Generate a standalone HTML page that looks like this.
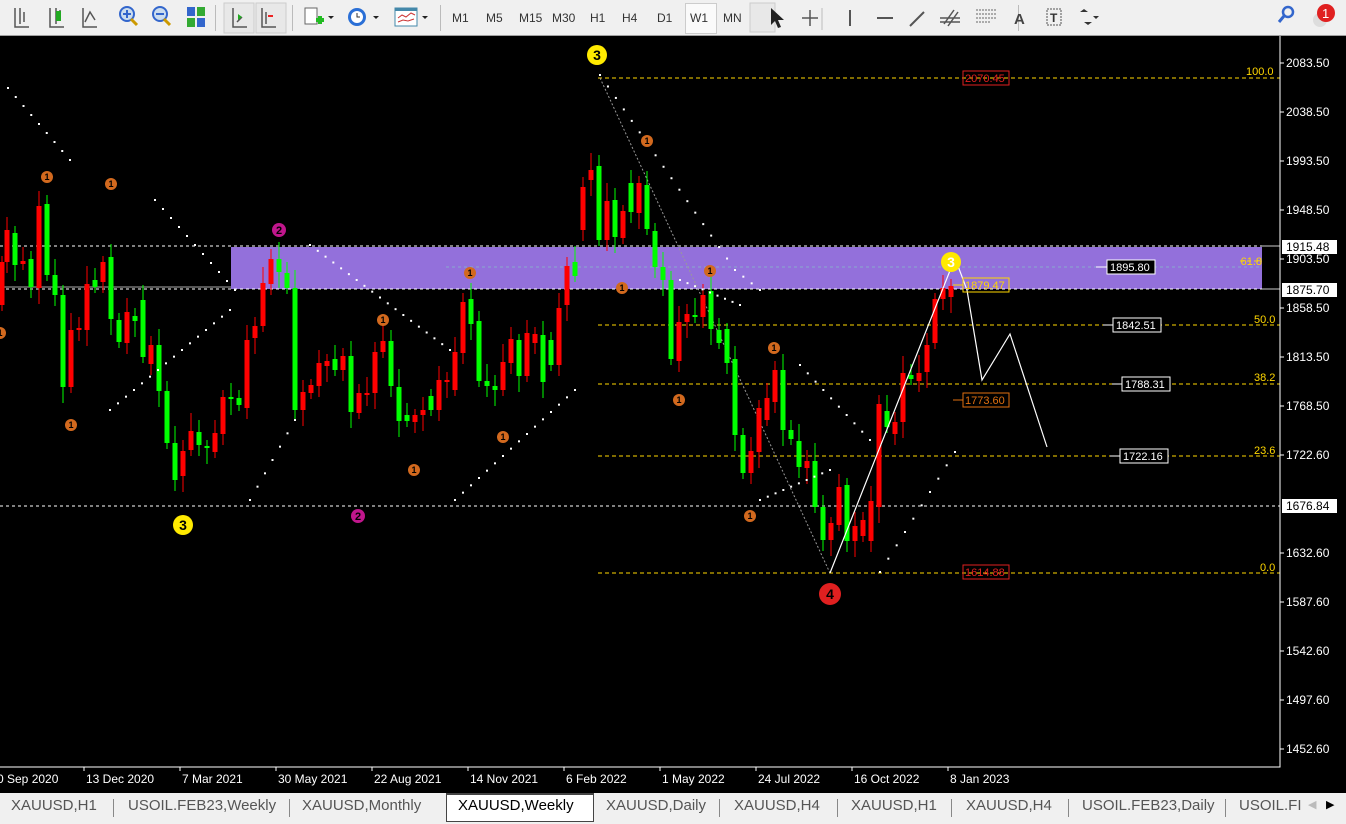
<!DOCTYPE html>
<html><head><meta charset="utf-8"><style>
body{margin:0;width:1346px;height:824px;overflow:hidden;background:#f0f0f0;font-family:"Liberation Sans",sans-serif;position:relative}
#tb{position:absolute;left:0;top:0;width:1346px;height:35px;background:#f0f0f0;border-bottom:1px solid #a0a0a0}
.tf{position:absolute;top:11px;font-size:12px;color:#333}
.sep{position:absolute;top:5px;width:1px;height:26px;background:#bbb}
#tabs{position:absolute;left:0;top:793px;width:1346px;height:31px;background:#f0f0f0}
.tab{position:absolute;top:4px;font-size:15px;color:#555}
.vs{position:absolute;top:6px;width:1px;height:18px;background:#888}
</style></head><body>
<div id="tb">
<svg width="700" height="36" style="position:absolute;left:0;top:0">
<g stroke="#555" fill="none" stroke-width="1.5">
<path d="M15 8v19h14M20 8v16M24 12v10"/>
<path d="M50 8v19h14M56 8v16M60 10v10"/>
<path d="M83 8v19h14M85 22l5-10 5 8"/>
</g>
<rect x="56" y="11" width="5" height="10" fill="#2a2"/>
<circle cx="127" cy="14" r="7" fill="#cde" stroke="#36c" stroke-width="2"/><path d="M131 19l6 6" stroke="#c90" stroke-width="3"/><path d="M123 14h8M127 10v8" stroke="#36c" stroke-width="2"/>
<circle cx="160" cy="14" r="7" fill="#cde" stroke="#36c" stroke-width="2"/><path d="M164 19l6 6" stroke="#c90" stroke-width="3"/><path d="M156 14h8" stroke="#36c" stroke-width="2"/>
<rect x="187" y="7" width="8" height="9" fill="#36c"/><rect x="197" y="7" width="8" height="9" fill="#3a3"/><rect x="187" y="18" width="8" height="9" fill="#3a3"/><rect x="197" y="18" width="8" height="9" fill="#36c"/>
<rect x="224" y="3" width="30" height="30" fill="#e8e8e8" stroke="#ccc"/><rect x="256" y="3" width="30" height="30" fill="#e8e8e8" stroke="#ccc"/>
<path d="M233 8v19h14M237 22l5-5M262 8v19h14M266 12v12" stroke="#555" stroke-width="1.5" fill="none"/>
<path d="M238 14l4 3-4 3z" fill="#2a2"/><path d="M268 16h5" stroke="#e22" stroke-width="2"/>
<rect x="305" y="8" width="12" height="16" fill="#fff" stroke="#666"/><path d="M316 20h8M320 16v8" stroke="#2b2" stroke-width="4"/><path d="M328 16l3 3 3-3z" fill="#222"/>
<circle cx="357" cy="17" r="9" fill="#2a6fd6"/><circle cx="357" cy="17" r="6" fill="#fff"/><path d="M357 13v4h3" stroke="#333" fill="none"/><path d="M373 16l3 3 3-3z" fill="#222"/>
<rect x="395" y="8" width="22" height="18" fill="#fff" stroke="#48a"/><rect x="395" y="8" width="22" height="3" fill="#48a"/><path d="M398 18l4-3 4 2 5-4 4 2M398 22l5-2 5 1 6-2" stroke="#c33" fill="none"/><path d="M422 16l3 3 3-3z" fill="#222"/>
</g></svg>
<div class="sep" style="left:215px"></div><div class="sep" style="left:292px"></div><div class="sep" style="left:440px"></div>
<span class="tf" style="left:452px">M1</span><span class="tf" style="left:486px">M5</span><span class="tf" style="left:519px">M15</span><span class="tf" style="left:552px">M30</span><span class="tf" style="left:590px">H1</span><span class="tf" style="left:622px">H4</span><span class="tf" style="left:657px">D1</span>
<div style="position:absolute;left:685px;top:3px;width:30px;height:29px;background:#fafafa;border:1px solid #ccc"></div>
<span class="tf" style="left:690px">W1</span><span class="tf" style="left:723px">MN</span>
<div class="sep" style="left:752px"></div><div class="sep" style="left:1018px"></div>
<svg width="646" height="36" style="position:absolute;left:700px;top:0">
<rect x="50" y="3" width="25" height="29" fill="#e8e8e8" stroke="#ccc"/>
<path d="M71 8v17l4-4 3 7 3-1-3-7h6z" fill="#222"/>
<path d="M110 10v16M102 18h16" stroke="#555" stroke-width="1.5"/>
<path d="M122 8v22" stroke="#bbb"/>
<path d="M150 10v16M177 18h16M210 26l14-14" stroke="#555" stroke-width="2"/>
<path d="M244 24l10-14M248 26l10-14M240 18h20M240 22h20" stroke="#555" stroke-width="1.5"/>
<path d="M276 10h20M276 14h20M276 18h20M276 22h14" stroke="#666" stroke-dasharray="2 1"/>
<text x="314" y="24" font-size="15" font-weight="bold" fill="#444" font-family="Liberation Sans,sans-serif">A</text>
<rect x="347" y="9" width="14" height="16" fill="none" stroke="#555" stroke-dasharray="2 1"/><text x="350" y="22" font-size="12" font-weight="bold" fill="#333" font-family="Liberation Sans,sans-serif">T</text>
<path d="M380 12l4-3 4 3zM384 22l4 3 4-3zM393 16l3 3 3-3z" fill="#333"/>
<circle cx="588" cy="12" r="5" fill="none" stroke="#36c" stroke-width="2.5"/><path d="M584 16l-5 6" stroke="#36c" stroke-width="3"/>
<circle cx="620" cy="20" r="7" fill="#ddd"/><circle cx="626" cy="13" r="9" fill="#e02020"/><text x="622" y="18" font-size="13" fill="#fff" font-family="Liberation Sans,sans-serif">1</text>
</svg>
</div>

<svg width="1346" height="757" style="position:absolute;left:0;top:36px" font-family="Liberation Sans,sans-serif">
<rect width="1346" height="757" fill="#000"/>
<g transform="translate(0,-36)">
<rect x="231" y="247" width="1031" height="42" fill="#9370db"/>
<g stroke="#fff" stroke-dasharray="3 3" stroke-width="1">
<path d="M0 246H1262M0 289H1262M0 506H1280"/>
</g>
<path d="M0 287H231" stroke="#aaa"/>
<path d="M1262 289H1280M1262 246H1280" stroke="#ccc"/>
<path d="M446 267H1262" stroke="#8ac" stroke-dasharray="3 3"/>
<g stroke="#ffd700" stroke-dasharray="4 3">
<path d="M598 78H1280M1240 261H1262M598 325H1280M598 384H1280M598 456H1280M598 573H1280"/>
</g>
<g fill="#ffd700" font-size="11"><text x="1246" y="75">100.0</text><text x="1262" y="265" text-anchor="end">61.8</text><text x="1254" y="323">50.0</text><text x="1254" y="381">38.2</text><text x="1254" y="454">23.6</text><text x="1260" y="571">0.0</text></g>
<path d="M600 78L830 573" stroke="#999" stroke-dasharray="2 2"/>
<g id="c"></g>
<g id="d" fill="#fff"></g>
<polyline points="830,573 955,258 967,290 982,380 1010,334 1047,447" fill="none" stroke="#fff" stroke-width="1.2"/>
<g font-size="11">
<rect x="963" y="71" width="46" height="14" fill="none" stroke="#e02020"/><text x="965" y="82" fill="#e02020">2070.45</text>
<path d="M953 285h10" stroke="#ffd700"/><rect x="963" y="278" width="46" height="14" fill="none" stroke="#ffd700"/><text x="965" y="289" fill="#ffd700">1879.47</text>
<path d="M953 400h10" stroke="#e07010"/><rect x="963" y="393" width="46" height="14" fill="none" stroke="#e07010"/><text x="965" y="404" fill="#e07010">1773.60</text>
<rect x="963" y="565" width="46" height="14" fill="none" stroke="#e02020"/><text x="965" y="576" fill="#e02020">1614.88</text>
<g fill="#fff"><path d="M1096 267h11M1103 325h10M1112 384h10M1110 456h10" stroke="#fff"/>
<rect x="1107" y="260" width="48" height="14" fill="#000" stroke="#fff"/><text x="1110" y="271">1895.80</text>
<rect x="1113" y="318" width="48" height="14" fill="#000" stroke="#fff"/><text x="1116" y="329">1842.51</text>
<rect x="1122" y="377" width="48" height="14" fill="#000" stroke="#fff"/><text x="1125" y="388">1788.31</text>
<rect x="1120" y="449" width="48" height="14" fill="#000" stroke="#fff"/><text x="1123" y="460">1722.16</text></g>
</g>
<g font-size="14" font-weight="bold" text-anchor="middle">
<circle cx="597" cy="55" r="10" fill="#ffea00"/><text x="597" y="60">3</text>
<circle cx="183" cy="525" r="10" fill="#ffea00"/><text x="183" y="530">3</text>
<circle cx="951" cy="262" r="10" fill="#ffea00"/><text x="951" y="267" fill="#fff">3</text>
<circle cx="830" cy="594" r="11" fill="#e02020"/><text x="830" y="599" fill="#000">4</text>
<circle cx="279" cy="230" r="7" fill="#c0168c"/><text x="279" y="234" font-size="11">2</text>
<circle cx="358" cy="516" r="7" fill="#c0168c"/><text x="358" y="520" font-size="11">2</text>
</g>
<g id="o" font-size="9" font-weight="bold" text-anchor="middle"></g>
<path d="M1280 36V767H0" stroke="#fff" fill="none"/>
<g fill="#fff" font-size="12">
<text x="1286" y="67">2083.50</text><text x="1286" y="116">2038.50</text><text x="1286" y="165">1993.50</text><text x="1286" y="214">1948.50</text><text x="1286" y="263">1903.50</text><text x="1286" y="312">1858.50</text><text x="1286" y="361">1813.50</text><text x="1286" y="410">1768.50</text><text x="1286" y="459">1722.60</text><text x="1286" y="557">1632.60</text><text x="1286" y="606">1587.60</text><text x="1286" y="655">1542.60</text><text x="1286" y="704">1497.60</text><text x="1286" y="753">1452.60</text>
</g>
<path d="M1280 63h4M1280 112h4M1280 161h4M1280 210h4M1280 259h4M1280 308h4M1280 357h4M1280 406h4M1280 455h4M1280 553h4M1280 602h4M1280 651h4M1280 700h4M1280 749h4" stroke="#fff"/>
<g font-size="12"><rect x="1282" y="240" width="55" height="14" fill="#fff"/><text x="1286" y="251">1915.48</text>
<rect x="1282" y="283" width="55" height="14" fill="#fff"/><text x="1286" y="294">1875.70</text>
<rect x="1282" y="499" width="55" height="14" fill="#fff"/><text x="1286" y="510">1676.84</text></g>
<g fill="#fff" font-size="12">
<text x="-3" y="783">0 Sep 2020</text><text x="86" y="783">13 Dec 2020</text><text x="182" y="783">7 Mar 2021</text><text x="278" y="783">30 May 2021</text><text x="374" y="783">22 Aug 2021</text><text x="470" y="783">14 Nov 2021</text><text x="566" y="783">6 Feb 2022</text><text x="662" y="783">1 May 2022</text><text x="758" y="783">24 Jul 2022</text><text x="854" y="783">16 Oct 2022</text><text x="950" y="783">8 Jan 2023</text>
</g>
<path d="M84 767v4M180 767v4M276 767v4M372 767v4M468 767v4M564 767v4M660 767v4M756 767v4M852 767v4M948 767v4" stroke="#fff"/>
</g></svg>

<div id="tabs">
<div style="position:absolute;left:446px;top:0;width:146px;height:26px;background:#fff;border:1px solid #444;border-top:2px solid #444"></div>
<span class="tab" style="left:11px">XAUUSD,H1</span><div class="vs" style="left:113px"></div>
<span class="tab" style="left:128px">USOIL.FEB23,Weekly</span><div class="vs" style="left:289px"></div>
<span class="tab" style="left:302px">XAUUSD,Monthly</span>
<span class="tab" style="left:458px;color:#000">XAUUSD,Weekly</span>
<span class="tab" style="left:606px">XAUUSD,Daily</span><div class="vs" style="left:719px"></div>
<span class="tab" style="left:734px">XAUUSD,H4</span><div class="vs" style="left:837px"></div>
<span class="tab" style="left:851px">XAUUSD,H1</span><div class="vs" style="left:951px"></div>
<span class="tab" style="left:966px">XAUUSD,H4</span><div class="vs" style="left:1068px"></div>
<span class="tab" style="left:1082px">USOIL.FEB23,Daily</span><div class="vs" style="left:1225px"></div>
<span class="tab" style="left:1239px">USOIL.FI</span>
<span style="position:absolute;left:1308px;top:5px;font-size:11px;color:#bbb">◀</span><span style="position:absolute;left:1326px;top:5px;font-size:11px;color:#000">▶</span>
</div>

<script>
var C=[[2,262,305,'r'],[7,230,262,'r'],[15,233,265,'g'],[23,261,264,'r'],[31,259,287,'g'],[39,206,288,'r'],[47,204,275,'g'],[55,275,295,'g'],[63,295,387,'g'],[71,330,387,'r'],[79,328,330,'r'],[87,284,330,'r'],[95,280,287,'g'],[103,262,282,'r'],[111,257,319,'g'],[119,320,342,'g'],[127,312,343,'r'],[135,316,321,'g'],[143,300,357,'g'],[151,345,364,'r'],[159,345,391,'g'],[167,391,443,'g'],[175,443,480,'g'],[183,451,476,'r'],[191,431,450,'r'],[199,432,445,'g'],[207,446,448,'g'],[215,433,452,'r'],[223,397,434,'r'],[231,397,399,'g'],[239,398,405,'g'],[247,340,408,'r'],[255,326,338,'r'],[263,283,326,'r'],[271,259,284,'r'],[279,259,272,'g'],[287,273,288,'g'],[295,288,410,'g'],[303,392,410,'r'],[311,385,393,'r'],[319,363,386,'r'],[327,361,366,'r'],[335,359,370,'g'],[343,356,370,'r'],[351,356,412,'g'],[359,393,413,'r'],[367,393,395,'r'],[375,352,393,'r'],[383,341,352,'r'],[391,341,386,'g'],[399,387,421,'g'],[407,415,421,'g'],[415,415,422,'r'],[423,410,415,'r'],[431,396,410,'g'],[439,380,410,'r'],[447,380,382,'r'],[455,352,390,'r'],[463,302,353,'r'],[471,299,324,'g'],[479,321,381,'g'],[487,381,386,'g'],[495,386,390,'g'],[503,362,390,'r'],[511,339,363,'r'],[519,340,376,'g'],[527,333,376,'r'],[535,334,343,'r'],[543,335,382,'g'],[551,340,365,'g'],[559,308,365,'r'],[567,266,305,'r'],[575,262,276,'g'],[583,187,230,'r'],[591,170,180,'r'],[599,166,240,'g'],[607,201,240,'r'],[615,200,237,'g'],[623,211,238,'r'],[631,183,212,'g'],[639,183,213,'r'],[647,185,229,'g'],[655,231,267,'g'],[663,267,280,'g'],[671,280,359,'g'],[679,322,361,'r'],[687,314,322,'r'],[695,315,317,'g'],[703,295,317,'r'],[711,291,329,'g'],[719,330,343,'g'],[727,329,363,'g'],[735,359,435,'g'],[743,435,473,'g'],[751,451,473,'r'],[759,408,452,'r'],[767,398,420,'r'],[775,370,402,'r'],[783,370,430,'g'],[791,430,439,'g'],[799,441,467,'g'],[807,461,468,'r'],[815,461,507,'g'],[823,507,540,'g'],[831,523,540,'r'],[839,487,525,'r'],[847,485,541,'g'],[855,526,541,'r'],[863,520,536,'r'],[871,501,541,'r'],[879,404,507,'r'],[887,411,427,'g'],[895,422,434,'r'],[903,373,422,'r'],[911,375,379,'g'],[919,373,381,'r'],[927,345,372,'r'],[935,299,343,'r'],[943,288,299,'r'],[951,286,297,'r']];
var s='';C.forEach(function(c,i){var col=c[3]=='r'?'#ff0000':'#00ff00';var t=c[1]-6-(i*7%13),b=c[2]+6+(i*5%15);
s+='<line x1="'+c[0]+'" x2="'+c[0]+'" y1="'+t+'" y2="'+b+'" stroke="'+col+'"/><rect x="'+(c[0]-2.5)+'" y="'+c[1]+'" width="5" height="'+Math.max(2,c[2]-c[1])+'" fill="'+col+'"/>';});
document.getElementById('c').innerHTML=s;
var D=[[8,88,70,160],[155,200,235,290],[110,410,230,310],[250,500,295,420],[310,245,450,350],[455,500,575,390],[600,75,735,270],[735,270,760,290],[680,280,740,305],[800,365,870,440],[760,500,830,470],[880,572,955,452]];
var d='';D.forEach(function(l){var n=Math.round(Math.abs(l[2]-l[0])/8);for(var k=0;k<=n;k++){var x=l[0]+(l[2]-l[0])*k/n,y=l[1]+(l[3]-l[1])*k/n;d+='<rect x="'+(x-1)+'" y="'+(y-1)+'" width="2" height="2"/>';}});
document.getElementById('d').innerHTML=d;
var O=[[47,177],[111,184],[71,425],[0,333],[383,320],[414,470],[503,437],[470,273],[622,288],[647,141],[710,271],[679,400],[774,348],[750,516]];
var o='';O.forEach(function(p){o+='<circle cx="'+p[0]+'" cy="'+p[1]+'" r="6" fill="#d2691e"/><text x="'+p[0]+'" y="'+(p[1]+3)+'" fill="#000">1</text>';});
document.getElementById('o').innerHTML=o;
</script>
</body></html>
